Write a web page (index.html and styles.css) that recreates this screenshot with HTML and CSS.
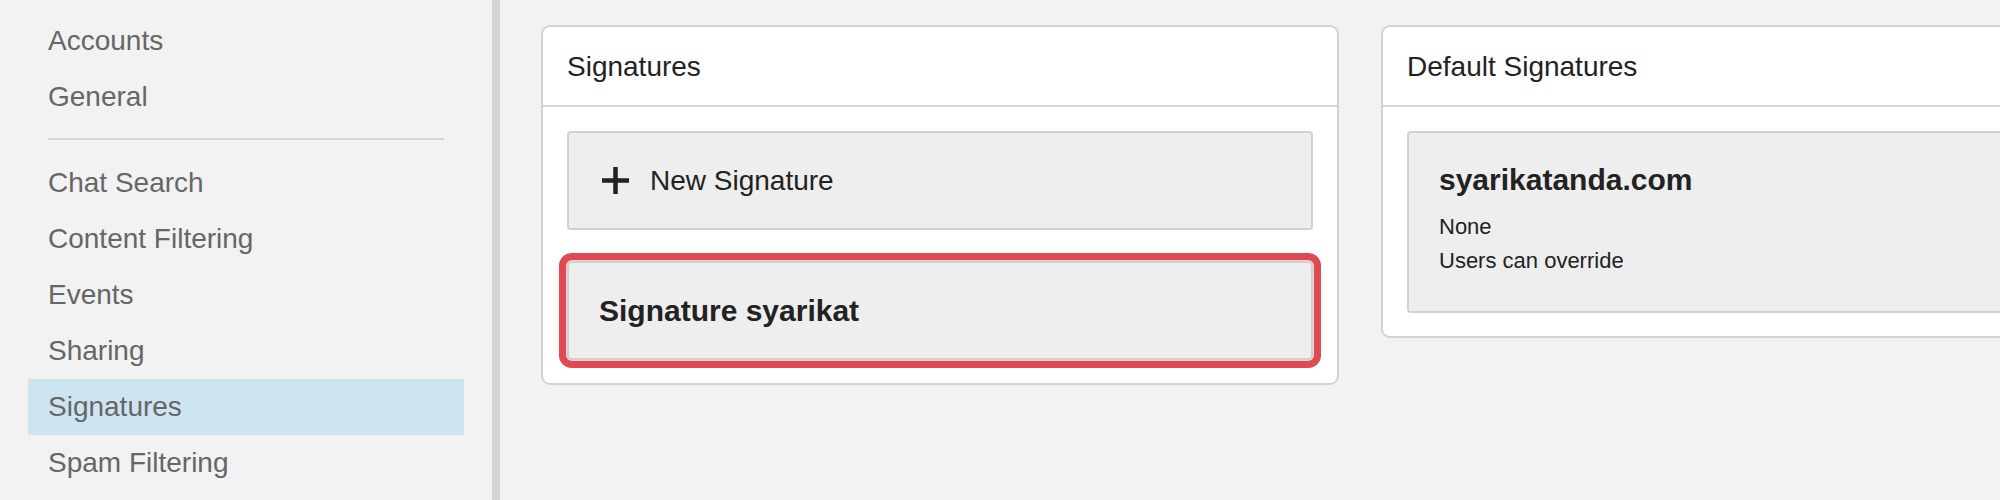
FILE: index.html
```html
<!DOCTYPE html>
<html lang="en">
<head>
<meta charset="utf-8">
<title>Signatures</title>
<link rel="stylesheet" href="styles.css">
</head>
<body>
<div class="app">
  <nav class="sidebar">
    <ul class="nav">
      <li class="nav-item">Accounts</li>
      <li class="nav-item">General</li>
    </ul>
    <div class="nav-sep"></div>
    <ul class="nav">
      <li class="nav-item">Chat Search</li>
      <li class="nav-item">Content Filtering</li>
      <li class="nav-item">Events</li>
      <li class="nav-item">Sharing</li>
      <li class="nav-item active">Signatures</li>
      <li class="nav-item">Spam Filtering</li>
    </ul>
  </nav>
  <main class="main">
    <section class="card">
      <header class="card-header">Signatures</header>
      <div class="card-body list">
        <div class="tile tile-new">
          <svg class="plus" width="27" height="27" viewBox="0 0 27 27" aria-hidden="true">
            <rect x="11.25" y="0" width="4.5" height="27" fill="#222"/>
            <rect x="0" y="11.25" width="27" height="4.5" fill="#222"/>
          </svg>
          <span class="tile-label">New Signature</span>
        </div>
        <div class="tile tile-selected">
          <span class="tile-title">Signature syarikat</span>
        </div>
      </div>
    </section>
    <section class="card">
      <header class="card-header">Default Signatures</header>
      <div class="card-body">
        <div class="domain-box">
          <h3 class="domain">syarikatanda.com</h3>
          <p class="domain-line">None</p>
          <p class="domain-line">Users can override</p>
        </div>
      </div>
    </section>
  </main>
</div>
</body>
</html>
```

FILE: styles.css
```css
html, body {
  margin: 0;
  padding: 0;
  height: 100%;
  overflow: hidden;
  background: #f2f2f2;
  font-family: "Liberation Sans", Arial, sans-serif;
}

.app {
  display: flex;
  height: 500px;
}

.sidebar {
  width: 436px;
  flex: 0 0 436px;
  padding: 13px 28px 0;
  border-right: 8px solid #d4d4d4;
  background: #f2f2f2;
}

.nav {
  list-style: none;
  margin: 0;
  padding: 0;
}

.nav-item {
  height: 56px;
  line-height: 56px;
  padding-left: 20px;
  font-size: 28px;
  color: #666666;
  white-space: nowrap;
}

.nav-item.active {
  background: #cde5f1;
}

.nav-sep {
  height: 2px;
  margin: 13px 20px 15px;
  background: #d6d6d6;
}

.main {
  flex: 1;
  display: flex;
  gap: 42px;
  padding: 25px 0 0 41px;
  overflow: hidden;
  align-items: flex-start;
}

.card {
  flex: 0 0 798px;
  width: 798px;
  box-sizing: border-box;
  background: #ffffff;
  border: 2px solid #d3d3d3;
  border-radius: 9px;
}

.card-header {
  height: 77px;
  line-height: 78px;
  padding: 1px 24px 0;
  font-size: 28px;
  color: #222222;
  border-bottom: 2px solid #d6d6d6;
}

.card-body {
  padding: 24px 24px 23px;
}

.list {
  display: flex;
  flex-direction: column;
  gap: 31px;
}

.tile {
  box-sizing: border-box;
  height: 99px;
  display: flex;
  align-items: center;
  padding: 0 30px;
  background: #eeeeee;
  border: 2px solid #d0d0d0;
  border-radius: 4px;
}

.plus {
  display: block;
  margin-left: 3px;
  flex: 0 0 27px;
}

.tile-label {
  margin-left: 21px;
  font-size: 28px;
  color: #222222;
}

.tile-title {
  font-size: 30px;
  font-weight: bold;
  color: #222222;
}

.tile-selected {
  box-shadow: 0 0 0 1px #f3d0d2, 0 0 0 8px #df4a52;
  border-radius: 5px;
}

.domain-box {
  box-sizing: border-box;
  background: #eeeeee;
  border: 2px solid #d0d0d0;
  border-radius: 4px;
  padding: 29px 30px 33px;
}

.domain {
  margin: 0 0 12px;
  font-size: 30px;
  line-height: 36px;
  font-weight: bold;
  color: #222222;
}

.domain-line {
  margin: 0;
  font-size: 22px;
  line-height: 34px;
  color: #222222;
}
```
